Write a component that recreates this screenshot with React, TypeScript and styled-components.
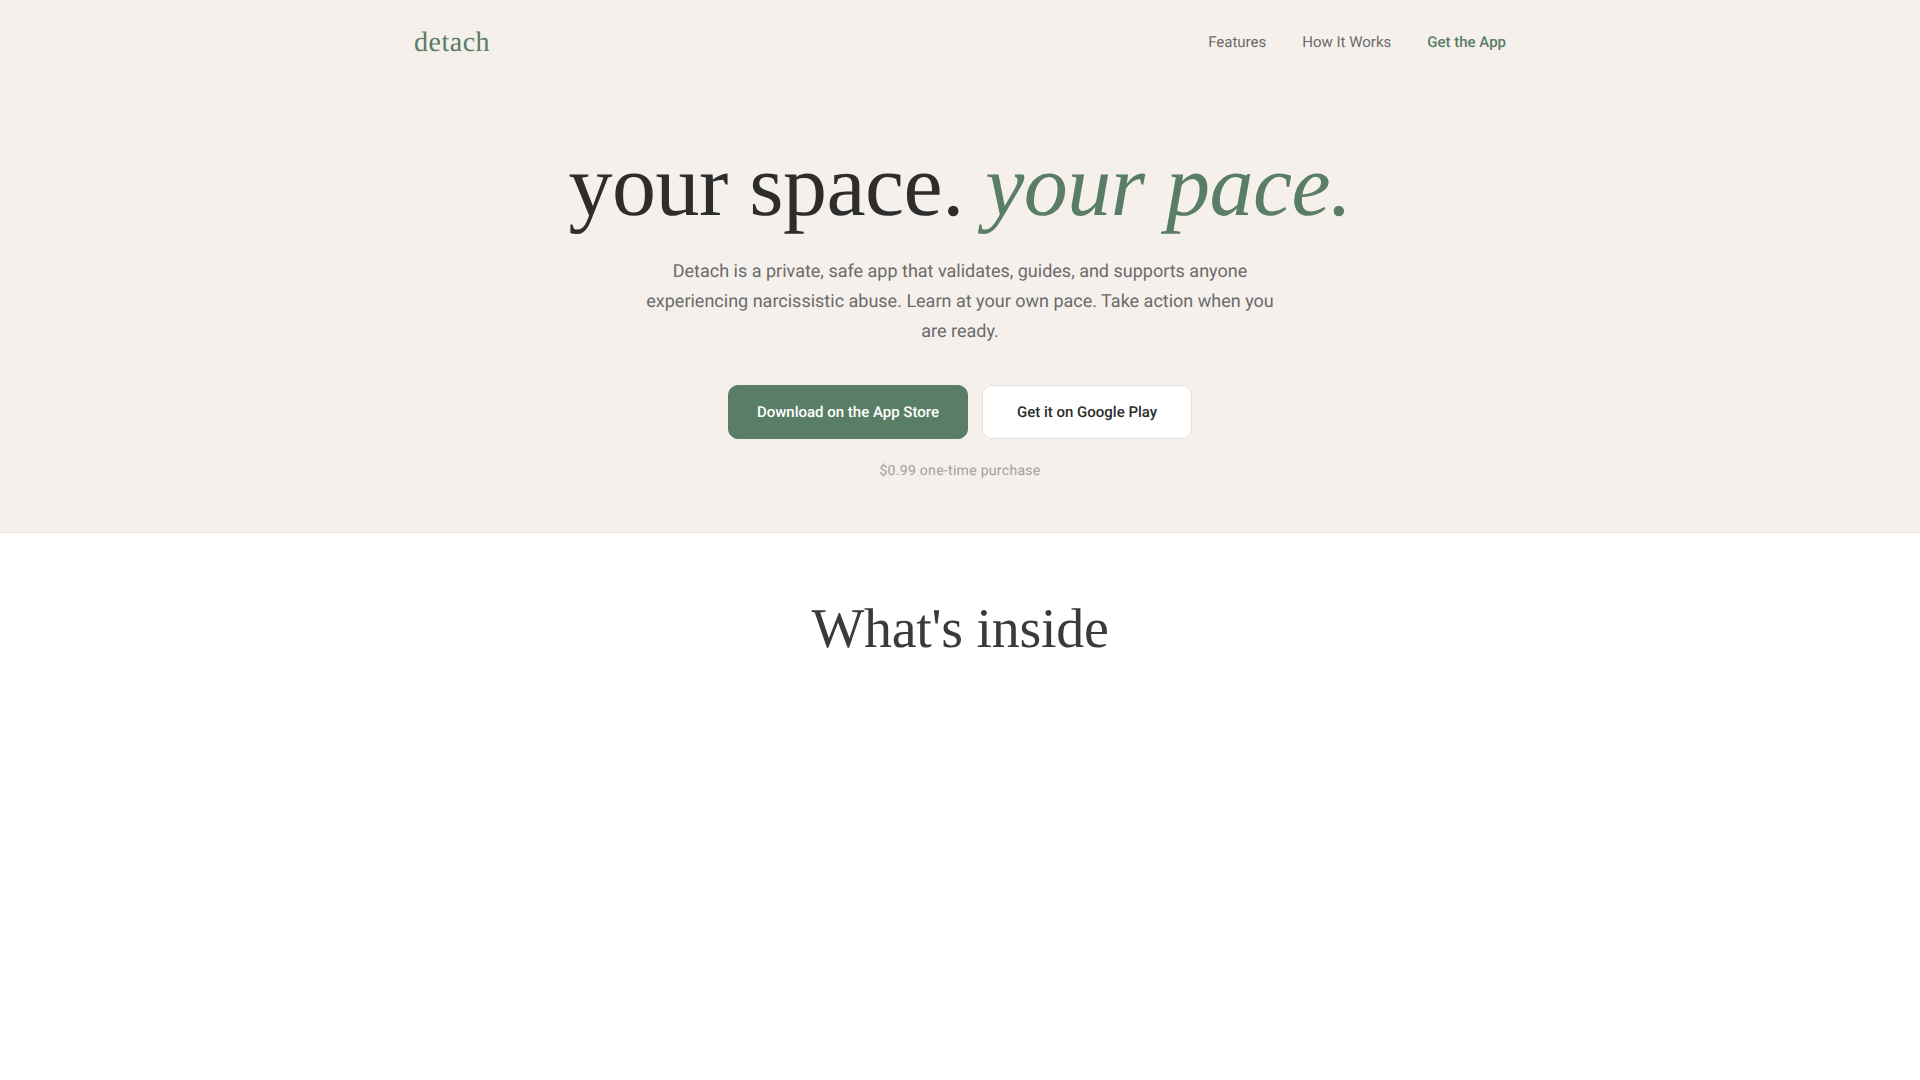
import React from 'react';
import styled, {createGlobalStyle} from 'styled-components';

const GlobalStyle = createGlobalStyle`
    * {
        box-sizing: border-box;
    }

    body {
        margin: 0;
        background: #ffffff;
        font-family: 'Roboto', sans-serif;
        text-rendering: geometricPrecision;
    }
`;

const Hero = styled.section`
    background: #f5f0ec;
    border-bottom: 1px solid #e8e0da;
    height: 533px;
`;

const Header = styled.header`
    max-width: 1140px;
    margin: 0 auto;
    padding: 0 24px;
    height: 84px;
    display: flex;
    align-items: center;
    justify-content: space-between;
`;

const Logo = styled.div`
    padding-top: 2px;
    font-family: 'Liberation Serif', serif;
    font-size: 28px;
    letter-spacing: 0.5px;
    color: #5a7d65;
`;

const Nav = styled.nav`
    display: flex;
    gap: 36px;
`;

const NavLink = styled.a<{$active?: boolean}>`
    font-size: 15px;
    font-weight: ${({$active}) => ($active ? 500 : 400)};
    color: ${({$active}) => ($active ? '#5a7d65' : '#6b6b6b')};
    text-decoration: none;
`;

const HeroBody = styled.div`
    display: flex;
    flex-direction: column;
    align-items: center;
    padding-top: 55px;
`;

const Title = styled.h1`
    margin: 0;
    font-family: 'Liberation Serif', serif;
    font-size: 88px;
    font-weight: 400;
    letter-spacing: -0.5px;
    line-height: 1.1;
    color: #2d2d2d;

    em {
        color: #5a7d65;
    }
`;

const Lead = styled.p`
    margin: 21px 0 0;
    max-width: 640px;
    font-size: 18px;
    line-height: 30px;
    text-align: center;
    color: #6b6b6b;
`;

const Actions = styled.div`
    display: flex;
    gap: 14px;
    margin-top: 38px;
`;

const Button = styled.a<{$primary?: boolean}>`
    display: flex;
    align-items: center;
    justify-content: center;
    height: 54px;
    padding: 0 ${({$primary}) => ($primary ? 28 : 34)}px;
    border-radius: 10px;
    font-size: 15px;
    font-weight: 500;
    text-decoration: none;
    color: ${({$primary}) => ($primary ? '#ffffff' : '#2d2d2d')};
    background: ${({$primary}) => ($primary ? '#5a7d65' : '#ffffff')};
    border: 1px solid ${({$primary}) => ($primary ? '#5a7d65' : '#e8e0da')};
`;

const Price = styled.p`
    margin: 24px 0 0;
    font-size: 14px;
    letter-spacing: 0.3px;
    color: #a0a0a0;
`;

const Features = styled.section`
    padding-top: 66px;
    height: 547px;
    background: #ffffff;
`;

const SectionTitle = styled.h2`
    margin: 0;
    font-family: 'Liberation Serif', serif;
    font-size: 56px;
    font-weight: 400;
    letter-spacing: -0.3px;
    line-height: 1.1;
    text-align: center;
    color: #3a3a3a;
`;

const App = () => {
    return (
        <>
            <GlobalStyle />
            <Hero>
                <Header>
                    <Logo>detach</Logo>
                    <Nav>
                        <NavLink href='#'>Features</NavLink>
                        <NavLink href='#'>How It Works</NavLink>
                        <NavLink href='#' $active>Get the App</NavLink>
                    </Nav>
                </Header>
                <HeroBody>
                    <Title>your space. <em>your pace.</em></Title>
                    <Lead>
                        Detach is a private, safe app that validates, guides, and supports anyone experiencing
                        narcissistic abuse. Learn at your own pace. Take action when you are ready.
                    </Lead>
                    <Actions>
                        <Button href='#' $primary>Download on the App Store</Button>
                        <Button href='#'>Get it on Google Play</Button>
                    </Actions>
                    <Price>$0.99 one-time purchase</Price>
                </HeroBody>
            </Hero>
            <Features>
                <SectionTitle>What's inside</SectionTitle>
            </Features>
        </>
    );
};

export default App;
